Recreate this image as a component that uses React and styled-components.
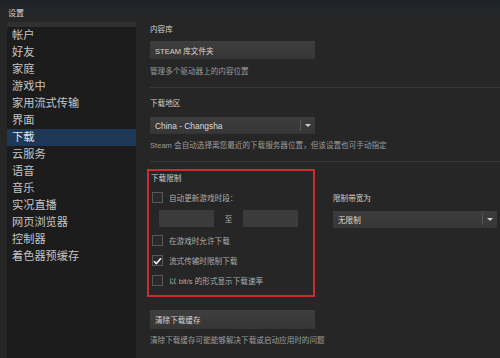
import React from "react"
import styled, { createGlobalStyle } from "styled-components"

const GlobalStyle = createGlobalStyle`
  html, body {
    margin: 0;
    padding: 0;
    background: #262626;
  }
  body {
    font-family: "Liberation Sans", "Noto Sans CJK SC", sans-serif;
  }
`

const menu = [
  "帐户",
  "好友",
  "家庭",
  "游戏中",
  "家用流式传输",
  "界面",
  "下载",
  "云服务",
  "语音",
  "音乐",
  "实况直播",
  "网页浏览器",
  "控制器",
  "着色器预缓存",
]

const Window = styled.div`
  width: 500px;
  height: 358px;
  overflow: hidden;
  display: flex;
  flex-direction: column;
  background: #262626;
`

const TitleBar = styled.div`
  height: 22px;
  flex: none;
  display: flex;
  align-items: center;
  padding-left: 8px;
  padding-top: 2px;
  box-sizing: border-box;
  font-size: 8px;
  color: #d4d4d4;
  background: linear-gradient(to bottom, #1c2128 0%, #23262a 45%, #262626 100%);
`

const Body = styled.div`
  flex: 1;
  display: flex;
  min-height: 0;
`

const Sidebar = styled.ul`
  list-style: none;
  margin: 0 0 0 7px;
  padding: 5px 0 0;
  width: 129px;
  flex: none;
  background: #1c1c1c;
  border-top: 0;
  box-shadow: inset 0 5px 0 #303030;
`

const MenuItem = styled.li`
  height: 17px;
  line-height: 17px;
  padding-left: 5px;
  font-size: 11.2px;
  color: ${(p) => (p.$active ? "#e4e4e4" : "#c4c4c4")};
  background: ${(p) => (p.$active ? "#1d3957" : "transparent")};
  white-space: nowrap;
`

const Content = styled.div`
  flex: 1;
  padding-left: 14px;
  display: flex;
  flex-direction: column;
`

const Label = styled.div`
  height: 10px;
  line-height: 10px;
  font-size: 7.6px;
  color: #cfcfcf;
  margin-top: ${(p) => p.$top || 0}px;
  white-space: nowrap;
`

const Desc = styled(Label)`
  color: #9c9c9c;
`

const Button = styled.div`
  width: 165px;
  height: ${(p) => p.$h || 18}px;
  margin-top: ${(p) => p.$top || 0}px;
  box-sizing: border-box;
  padding-left: 5px;
  display: flex;
  align-items: center;
  font-size: 7.6px;
  color: #d6d6d6;
  background: linear-gradient(to bottom, #3e3e3e, #363636);
  white-space: nowrap;
`

const Separator = styled.div`
  height: 1px;
  margin-top: ${(p) => p.$top || 0}px;
  background: #393939;
`

const Select = styled.div`
  width: ${(p) => p.$w || 165}px;
  height: 17px;
  margin-top: ${(p) => p.$top || 0}px;
  box-sizing: border-box;
  display: flex;
  align-items: center;
  background: linear-gradient(to bottom, #3d3d3d, #363636);
  font-size: ${(p) => p.$size || 8.4}px;
  color: #dadada;
`

const SelectText = styled.span`
  flex: 1;
  padding-left: 5px;
  white-space: nowrap;
`

const SelectArrow = styled.span`
  width: 14px;
  height: 11px;
  border-left: 1px solid #555;
  display: flex;
  align-items: center;
  justify-content: center;
`

const Arrow = styled.span`
  width: 0;
  height: 0;
  border-left: 3px solid transparent;
  border-right: 3px solid transparent;
  border-top: 3px solid #d0d0d0;
`

const LimitRow = styled.div`
  display: flex;
  margin-top: 7px;
  margin-left: -3px;
`

const Highlight = styled.div`
  width: 168px;
  height: 128px;
  box-sizing: border-box;
  border: 2px solid #cc2b2f;
  padding: 3px 2px 0;
  display: flex;
  flex-direction: column;
`

const CheckRow = styled.div`
  height: 13px;
  margin-top: 7px;
  display: flex;
  align-items: center;
  gap: 6px;
  padding-left: 1px;
  font-size: 7.6px;
  color: #adadad;
  white-space: nowrap;
`

const Box = styled.span`
  width: 11px;
  height: 11px;
  box-sizing: border-box;
  border: 1px solid #575757;
  background: #2a2a2a;
  display: flex;
  align-items: center;
  justify-content: center;
`

const TimeRow = styled.div`
  display: flex;
  align-items: center;
  margin-top: 6px;
  padding-left: 8px;
  font-size: 7.6px;
  color: #b0b0b0;
`

const TimeInput = styled.span`
  width: 55px;
  height: 17px;
  background: #3b3b3b;
`

const To = styled.span`
  width: 29px;
  text-align: center;
`

const RightColumn = styled.div`
  margin-left: 18px;
  display: flex;
  flex-direction: column;
`

const Check = () => (
  <svg width="9" height="8" viewBox="0 0 9 8">
    <path d="M1 4.2 L3.4 6.6 L8 1.2" fill="none" stroke="#f2f2f2" strokeWidth="1.6" />
  </svg>
)

const Checkbox = ({ checked, children }) => (
  <CheckRow>
    <Box>{checked && <Check />}</Box>
    <span>{children}</span>
  </CheckRow>
)

export default function App() {
  return (
    <Window>
      <GlobalStyle />
      <TitleBar>设置</TitleBar>
      <Body>
        <Sidebar>
          {menu.map((item) => (
            <MenuItem key={item} $active={item === "下载"}>
              {item}
            </MenuItem>
          ))}
        </Sidebar>
        <Content>
          <Label $top={3}>内容库</Label>
          <Button $top={6}>STEAM 库文件夹</Button>
          <Desc $top={8}>管理多个驱动器上的内容位置</Desc>
          <Separator $top={10} />
          <Label $top={11}>下载地区</Label>
          <Select $top={8}>
            <SelectText>China - Changsha</SelectText>
            <SelectArrow>
              <Arrow />
            </SelectArrow>
          </Select>
          <Desc $top={7}>Steam 会自动选择离您最近的下载服务器位置，但该设置也可手动指定</Desc>
          <Separator $top={10} />
          <LimitRow>
            <Highlight>
              <Label>下载限制</Label>
              <Checkbox>自动更新游戏时段：</Checkbox>
              <TimeRow>
                <TimeInput />
                <To>至</To>
                <TimeInput />
              </TimeRow>
              <Checkbox>在游戏时允许下载</Checkbox>
              <Checkbox checked>流式传输时限制下载</Checkbox>
              <Checkbox>以 bit/s 的形式显示下载速率</Checkbox>
            </Highlight>
            <RightColumn>
              <Label $top={25}>限制带宽为</Label>
              <Select $top={7} $w={164} $size={7.6}>
                <SelectText>无限制</SelectText>
                <SelectArrow>
                  <Arrow />
                </SelectArrow>
              </Select>
            </RightColumn>
          </LimitRow>
          <Button $top={13} $h={19}>清除下载缓存</Button>
          <Desc $top={7}>清除下载缓存可能能够解决下载或启动应用时的问题</Desc>
        </Content>
      </Body>
    </Window>
  )
}
